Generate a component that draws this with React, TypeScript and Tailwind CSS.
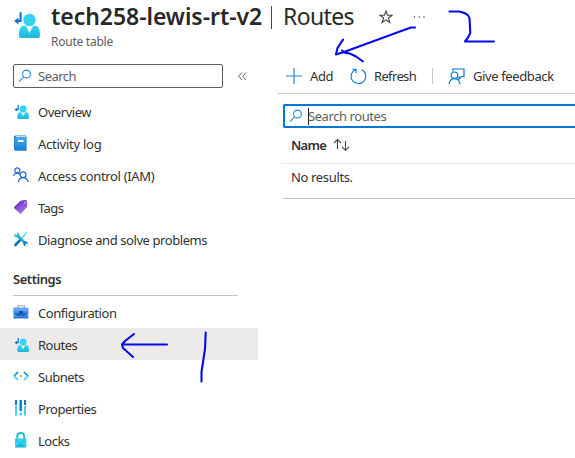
import type { ReactNode } from "react";

function RouteIcon({ size, id }: { size: number; id: string }) {
  return (
    <svg width={size} height={size} viewBox="0 0 27 27" className="block">
      <defs>
        <linearGradient id={id} x1="0" y1="0" x2="0" y2="1">
          <stop offset="0" stopColor="#32d4f5" />
          <stop offset="1" stopColor="#22b5d8" />
        </linearGradient>
      </defs>
      <path d="M7.6 1.2V10H2.5" fill="none" stroke="#1172cf" strokeWidth="2.1" />
      <path d="M5.4 6.6L1.2 10.1L5.4 13.6Z" fill="#1172cf" />
      <path d="M10.5 14.8H22.5C26 15 27 20 27 24.5Q27 27 25 27H7.8Q5.8 27 5.8 24.5C5.8 20 7 15 10.5 14.8Z" fill={`url(#${id})`} />
      <path d="M12.8 14.8L16.4 22L20.2 14.8Z" fill="#fff" />
      <circle cx="16.5" cy="9" r="6.2" fill="#32d4f5" />
    </svg>
  );
}

function SearchIcon() {
  return (
    <svg width="14" height="14" viewBox="0 0 14 14" fill="none" stroke="#2b88d8" strokeWidth="1.1">
      <circle cx="8.5" cy="5" r="3.9" />
      <path d="M5.7 7.8L1 12.6" />
    </svg>
  );
}

function BookIcon() {
  return (
    <svg width="16" height="16" viewBox="0 0 16 16">
      <defs>
        <linearGradient id="book" x1="0" y1="0" x2="0" y2="1">
          <stop offset="0" stopColor="#4aa5ea" />
          <stop offset="1" stopColor="#1683da" />
        </linearGradient>
      </defs>
      <path d="M2.5 .5H13V15.5H2.5Q1 15.5 1 14V2Q1 .5 2.5 .5Z" fill="#1268b5" />
      <path d="M3 1.5H13.7V15.5H3Q1.5 15.3 1.5 14V2.6Q1.5 1.5 3 1.5Z" fill="url(#book)" />
      <path d="M3 1.4H12.8" stroke="#c5e4fa" />
      <rect x="5" y="5" width="5.5" height="2" fill="#fff" />
    </svg>
  );
}

function PeopleIcon() {
  return (
    <svg width="16" height="16" viewBox="0 0 16 16" fill="none" stroke="#1765d8" strokeWidth="1.2">
      <circle cx="4.3" cy="3.4" r="2.5" />
      <path d="M.6 9.2C1 6.5 3 5.8 5.1 6.2L7 7.5" />
      <circle cx="10.1" cy="7.7" r="2.9" />
      <path d="M5.3 15.2C6 11.9 7.8 10.6 10.2 10.6S14.3 11.9 15.3 15.2" />
    </svg>
  );
}

function TagIcon() {
  return (
    <svg width="16" height="16" viewBox="0 0 16 16">
      <defs>
        <linearGradient id="tag" x1="0" y1="0" x2=".6" y2="1">
          <stop offset="0" stopColor="#6928c8" />
          <stop offset="1" stopColor="#a77bdc" />
        </linearGradient>
      </defs>
      <path d="M7.5 1.8L12.3 1Q13.6 1 13.5 2.4V6.2L7 14L1.2 9.2Q.8 8.5 1.5 7.8Z" fill="#682bc0" />
      <path d="M8.6 2.1L12.8 1.5Q14.3 1.5 14.2 3L14.1 8L7.8 15L2 9.8Z" fill="url(#tag)" />
      <circle cx="12" cy="3.8" r=".8" fill="#e1ccf7" />
    </svg>
  );
}

function ToolsIcon() {
  return (
    <svg width="16" height="16" viewBox="0 0 16 16" fill="none">
      <path d="M13.8 1.4L9 7" stroke="#53c8e7" strokeWidth="1.2" />
      <path d="M7.8 8.4L2.4 14" stroke="#0b77a7" strokeWidth="2.6" strokeLinecap="round" />
      <path d="M4 4L12.4 12.3" stroke="#19a9d4" strokeWidth="2.5" />
      <path d="M1.2 2.6A3.1 3.1 0 0 0 5.2 6.3 3 3 0 0 0 5.7 2L4.4 1 4.6 3.1 3.2 4.3Z" fill="#28bfdf" />
      <path d="M12 10.2Q15 10 15 13.2L13.5 12.3 12 13.8 13 15.2Q9.7 15 10.4 11.7Z" fill="#087db1" />
    </svg>
  );
}

function ToolboxIcon() {
  return (
    <svg width="16" height="16" viewBox="0 0 16 16">
      <path d="M4.7 4V1.8H11.3V4" fill="none" stroke="#a5a5a5" strokeWidth="1.1" />
      <rect x=".3" y="3.6" width="15.2" height="5" rx=".5" fill="#5ea7f3" />
      <rect x=".5" y="8.2" width="14.8" height="6" fill="#4389e6" />
      <path d="M.3 8H15.6" stroke="#3679d2" />
      <path d="M1.5 9L4.5 12H11.3L14.3 9Z" fill="#1769c4" />
      <rect x="6" y="7" width="4" height="2.6" fill="#0b55a6" />
      <path d="M.5 13.8H15.3" stroke="#2467bd" />
    </svg>
  );
}

function SubnetIcon() {
  return (
    <svg width="16" height="16" viewBox="0 0 16 16" fill="none" strokeWidth="1.7">
      <path d="M5 4L1 8" stroke="#1688dc" />
      <path d="M1 8L5 12" stroke="#3cd2f2" />
      <path d="M11 4L15 8" stroke="#1688dc" />
      <path d="M15 8L11 12" stroke="#3cd2f2" />
      <circle cx="8" cy="8" r="1.1" fill="#73b61e" />
    </svg>
  );
}

function PropertiesIcon() {
  return (
    <svg width="16" height="16" viewBox="0 0 16 16">
      <g fill="#0878cd">
        <rect x="2" y="0" width="2" height="5" />
        <rect x="6.5" y="0" width="2.4" height="11" />
        <rect x="11" y="0" width="2" height="5" />
      </g>
      <g fill="#43d4f2">
        <rect x="2" y="6" width="2" height="9.5" />
        <rect x="6.5" y="12.5" width="2.4" height="3" />
        <rect x="11" y="6" width="2" height="9.5" />
      </g>
    </svg>
  );
}

function LockIcon() {
  return (
    <svg width="16" height="16" viewBox="0 0 16 16">
      <path d="M4.2 7V4.3Q4.2 1 7.7 1T11.2 4.3V7" fill="none" stroke="#25bbd5" strokeWidth="1.9" />
      <rect x="2" y="6.4" width="11.4" height="9" rx=".8" fill="#31d0ec" />
      <path d="M2.2 15.3L7.7 10.8L13.2 15.3Z" fill="#1fb4d8" />
      <path d="M2.2 7.2L7.7 11.7L13.2 7.2" fill="none" stroke="#24bddd" strokeWidth=".8" />
    </svg>
  );
}

function NavItem({ icon, label, tracking, active = false }: { icon: ReactNode; label: string; tracking: string; active?: boolean }) {
  return (
    <li className={`flex h-8 items-center gap-[9px] pl-[13px] ${active ? "bg-[#edebe9]" : ""}`}>
      <span className="flex size-4 shrink-0 items-center justify-center">{icon}</span>
      <span className={`whitespace-nowrap pt-px ${tracking}`}>{label}</span>
    </li>
  );
}

function Annotations() {
  return (
    <svg className="pointer-events-none absolute inset-0" width="575" height="458" viewBox="0 0 575 458" fill="none" stroke="#0808ee" strokeWidth="2.1" strokeLinecap="round" strokeLinejoin="round">
      <path d="M415 27.5H411L404 30L344 52L336 54.5L337.5 48L343 39.7" />
      <path d="M342 50.5L345 52.8Q350 53 356 56.5L363 61.5" />
      <path d="M449.5 11.5H459Q468 13 469.5 18L470.3 33L468 37.5L465 41.5H494" />
      <path d="M167 344.5H122L125 341L134 334M122 344.5L123 348L133 357" />
      <path d="M205.7 332.5L205 349L201.5 372V381.5" />
    </svg>
  );
}

export default function App() {
  return (
    <div className="relative h-[458px] w-[575px] overflow-hidden bg-white font-['Noto_Sans','Open_Sans',sans-serif] text-[13px] leading-[18px] text-[#323130]">
      <header className="flex h-16 pl-[13px]">
        <div className="w-[38px] pt-[11px]"><RouteIcon size={27} id="route-large" /></div>
        <div>
          <div className="flex h-[34px] items-center text-[23px] leading-[34px] text-[#292827]">
            <h1 className="-mt-[2px] w-[213px] whitespace-nowrap font-semibold tracking-[-0.05px]">tech258-lewis-rt-v2</h1>
            <span className="ml-[7px] h-[23px] w-px bg-[#484644]" />
            <span className="-mt-[2px] ml-[11px] w-[72px] tracking-[-0.65px]">Routes</span>
            <svg className="ml-[24px]" width="14" height="14" viewBox="0 0 14 14" fill="none" stroke="#484644" strokeWidth="1.1"><path d="M7 1L8.5 5.3H13L9.4 8L10.8 12.5L7 9.8L3.2 12.5L4.6 8L1 5.3H5.5Z" /></svg>
            <svg className="ml-[20px]" width="13" height="4" fill="#484644"><circle cx="1.5" cy="2" r=".8" /><circle cx="6.3" cy="2" r=".8" /><circle cx="11" cy="2" r=".8" /></svg>
          </div>
          <p className="-mt-px text-[12px] tracking-[-0.25px] text-[#605e5c]">Route table</p>
        </div>
      </header>
      <div className="flex">
        <aside className="w-[258px] shrink-0">
          <div className="flex h-[31px] items-start pl-[13px]">
            <div className="flex h-6 w-[210px] items-center gap-[6px] rounded-[2px] border border-[#605e5c] pl-[4px] text-[#605e5c]"><SearchIcon /><span className="tracking-[-0.5px]">Search</span></div>
            <svg className="ml-[15px] mt-[8px]" width="9" height="9" viewBox="0 0 9 9" fill="none" stroke="#605e5c"><path d="M4 .5L.7 4.3L4 8M8 .5L4.7 4.3L8 8" /></svg>
          </div>
          <ul>
            <NavItem icon={<RouteIcon size={15} id="route-overview" />} label="Overview" tracking="tracking-[-0.45px]" />
            <NavItem icon={<BookIcon />} label="Activity log" tracking="tracking-[-0.25px]" />
            <NavItem icon={<PeopleIcon />} label="Access control (IAM)" tracking="tracking-[-0.32px]" />
            <NavItem icon={<TagIcon />} label="Tags" tracking="tracking-[-0.6px]" />
            <NavItem icon={<ToolsIcon />} label="Diagnose and solve problems" tracking="tracking-[-0.42px]" />
          </ul>
          <h2 className="ml-[13px] mt-[8px] h-[33px] w-[225px] border-b border-[#c8c6c4] pt-[7px] font-semibold tracking-[-0.45px]">Settings</h2>
          <ul>
            <NavItem icon={<ToolboxIcon />} label="Configuration" tracking="tracking-[-0.45px]" />
            <NavItem icon={<RouteIcon size={15} id="route-active" />} label="Routes" tracking="tracking-[-0.5px]" active />
            <NavItem icon={<SubnetIcon />} label="Subnets" tracking="tracking-[-0.5px]" />
            <NavItem icon={<PropertiesIcon />} label="Properties" tracking="tracking-[-0.48px]" />
            <NavItem icon={<LockIcon />} label="Locks" tracking="tracking-[-0.5px]" />
          </ul>
        </aside>
        <main className="ml-5 min-w-0 flex-1">
          <div className="flex h-[30px] items-center border-b border-[#c8c6c4] pb-[5px] pl-[8px]">
            <svg width="16" height="16" viewBox="0 0 16 16" fill="none" stroke="#2b88d8" strokeWidth="1.2"><path d="M8 0V16M0 8H16" /></svg>
            <span className="ml-[8px] w-[40px] tracking-[-0.4px]">Add</span>
            <svg width="17" height="17" viewBox="0 0 17 17" fill="none" stroke="#0078d4" strokeWidth="1.1"><path d="M2.4 1.3H6V5M5.7 1.5A7.3 7.3 0 1 0 11.8 1.8" /></svg>
            <span className="ml-[7px] w-[43px] tracking-[-0.65px]">Refresh</span>
            <span className="ml-[15px] h-[16px] w-px bg-[#c8c6c4]" />
            <svg className="ml-[15px]" width="17" height="17" viewBox="0 0 17 17" fill="none" stroke="#0078d4" strokeWidth="1.2"><path d="M5 3.5V1H16V8.5H13.5L11 11V8.5M1 16C1.8 12 3.7 10.7 6.4 10.7S11.2 12 12 16" /><circle cx="6.4" cy="7.3" r="3.3" /></svg>
            <span className="ml-[8px] whitespace-nowrap tracking-[-0.38px]">Give feedback</span>
          </div>
          <div className="ml-[5px] mt-[10px]">
            <div className="flex h-6 items-center rounded-l-[2px] border-2 border-r-0 border-[#0078d4] pl-[4px]">
              <SearchIcon />
              <span className="ml-[5px] h-[17px] w-px bg-[#201f1e]" />
              <span className="-ml-px tracking-[-0.43px] text-[#605e5c]">Search routes</span>
            </div>
            <div className="flex h-9 items-center border-b border-[#edebe9] pb-[2px] pl-[8px]">
              <strong className="w-[42px] font-semibold tracking-[-0.7px]">Name</strong>
              <svg width="18" height="13" viewBox="0 0 18 13" fill="none" stroke="#484644" strokeWidth="1.1"><path d="M4.5 11V1.5M1 5L4.5 1.5L8 5M12.5 3V12.3M9 8.8L12.5 12.3L16 8.8" /></svg>
            </div>
            <div className="flex h-[35px] items-center border-b border-[#c8c6c4] pb-[8px] pl-[8px] tracking-[-0.35px]">No results.</div>
          </div>
        </main>
      </div>
      <Annotations />
    </div>
  );
}
